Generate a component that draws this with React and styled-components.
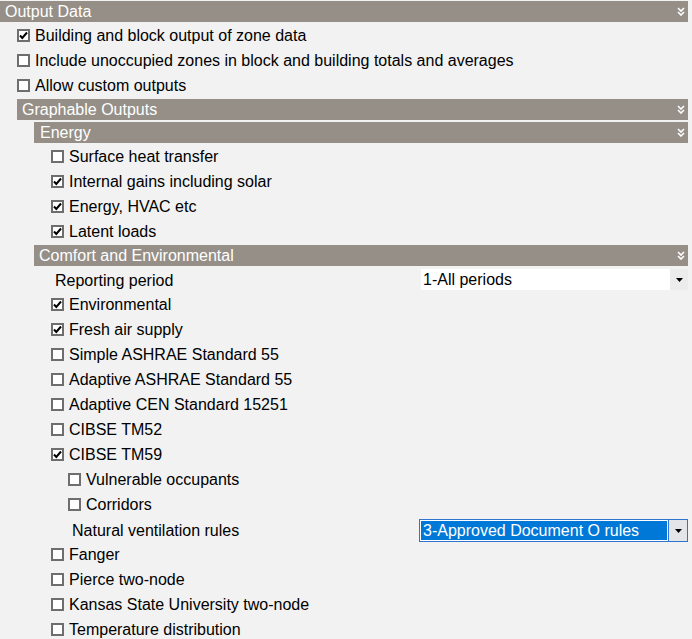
import React from "react";
import styled, { createGlobalStyle } from "styled-components";

const GlobalStyle = createGlobalStyle`
  html, body {
    margin: 0;
    padding: 0;
    background: #f2f2f2;
  }
  body {
    font-family: "Liberation Sans", Arial, sans-serif;
    font-size: 16px;
    color: #000;
  }
`;

const Panel = styled.div`
  width: 688px;
  height: 639px;
  overflow: hidden;
  background: #f2f2f2;
`;

const SectionWrap = styled.div`
  display: flex;
  flex-direction: column;
`;

const Header = styled.div`
  display: flex;
  align-items: center;
  justify-content: space-between;
  height: 21px;
  margin: 1px 0;
  padding: 0 3px 0 ${({ pad }) => pad || 5}px;
  background: #968f88;
  color: #fff;
  font-size: 16px;
  line-height: 21px;
`;

const Body = styled.div`
  display: flex;
  flex-direction: column;
  padding-left: 17px;
`;

const Row = styled.label`
  display: flex;
  align-items: center;
  gap: 5px;
  height: 25px;
  white-space: nowrap;
`;

const Box = styled.span`
  display: inline-flex;
  align-items: center;
  justify-content: center;
  box-sizing: border-box;
  width: 13px;
  height: 13px;
  border: 2px solid #6e6e6e;
  background: #fff;
  flex: none;
`;

const FieldRow = styled.div`
  display: flex;
  align-items: center;
  justify-content: space-between;
  height: 25px;
  padding-left: 4px;
  padding-top: 2px;
  box-sizing: border-box;
`;

const Select = styled.div`
  display: flex;
  box-sizing: border-box;
  width: ${({ w }) => w}px;
  height: ${({ active }) => (active ? 23 : 21)}px;
  margin-top: ${({ active }) => (active ? 0 : -2)}px;
  background: #fff;
  border: ${({ active }) => (active ? "1px solid #2f74d0" : "none")};
`;

const SelectText = styled.div`
  flex: 1;
  display: flex;
  align-items: center;
  padding-left: 2px;
  box-sizing: border-box;
  color: ${({ active }) => (active ? "#fff" : "#000")};
  background: ${({ active }) => (active ? "#0078d7" : "#fff")};
  border: ${({ active }) => (active ? "1px solid #fff" : "none")};
`;

const SelectButton = styled.div`
  width: 18px;
  display: flex;
  align-items: center;
  justify-content: center;
  background: ${({ active }) => (active ? "#e3e5e8" : "#ececec")};
  border-left: ${({ active }) => (active ? "1px solid #2f74d0" : "none")};
`;

const Label = styled.span`
  padding-left: ${({ pad }) => pad || 0}px;
`;

const Nested = styled.div`
  display: flex;
  flex-direction: column;
  padding-left: 17px;
`;

const Chevrons = () => (
  <svg width="8" height="9" viewBox="0 0 8 9">
    <polyline points="1,1 4,4 7,1" fill="none" stroke="#fff" strokeWidth="1.6" />
    <polyline points="1,5 4,8 7,5" fill="none" stroke="#fff" strokeWidth="1.6" />
  </svg>
);

const Tick = () => (
  <svg width="9" height="9" viewBox="0 0 9 9">
    <polyline points="1,4.5 3.3,7 8,1.5" fill="none" stroke="#000" strokeWidth="2" />
  </svg>
);

const Arrow = () => (
  <svg width="7" height="4" viewBox="0 0 7 4">
    <polygon points="0,0 7,0 3.5,4" fill="#000" />
  </svg>
);

const Section = ({ title, pad, children }) => (
  <SectionWrap>
    <Header pad={pad}>
      <span>{title}</span>
      <Chevrons />
    </Header>
    <Body>{children}</Body>
  </SectionWrap>
);

const Check = ({ checked, children }) => (
  <Row>
    <Box>{checked && <Tick />}</Box>
    <span>{children}</span>
  </Row>
);

const Dropdown = ({ label, value, active, w, labelPad }) => (
  <FieldRow>
    <Label pad={labelPad}>{label}</Label>
    <Select active={active} w={w}>
      <SelectText active={active}>{value}</SelectText>
      <SelectButton active={active}>
        <Arrow />
      </SelectButton>
    </Select>
  </FieldRow>
);

export default function App() {
  return (
    <Panel>
      <GlobalStyle />
      <Section title="Output Data" pad={5}>
        <Check checked>Building and block output of zone data</Check>
        <Check>Include unoccupied zones in block and building totals and averages</Check>
        <Check>Allow custom outputs</Check>
        <Section title="Graphable Outputs" pad={5}>
          <Section title="Energy" pad={6}>
            <Check>Surface heat transfer</Check>
            <Check checked>Internal gains including solar</Check>
            <Check checked>Energy, HVAC etc</Check>
            <Check checked>Latent loads</Check>
          </Section>
          <Section title="Comfort and Environmental" pad={5}>
            <Dropdown label="Reporting period" value="1-All periods" w={267} />
            <Check checked>Environmental</Check>
            <Check checked>Fresh air supply</Check>
            <Check>Simple ASHRAE Standard 55</Check>
            <Check>Adaptive ASHRAE Standard 55</Check>
            <Check>Adaptive CEN Standard 15251</Check>
            <Check>CIBSE TM52</Check>
            <Check checked>CIBSE TM59</Check>
            <Nested>
              <Check>Vulnerable occupants</Check>
              <Check>Corridors</Check>
            </Nested>
            <Dropdown
              label="Natural ventilation rules"
              value="3-Approved Document O rules"
              active
              w={269}
              labelPad={17}
            />
            <Check>Fanger</Check>
            <Check>Pierce two-node</Check>
            <Check>Kansas State University two-node</Check>
            <Check>Temperature distribution</Check>
          </Section>
        </Section>
      </Section>
    </Panel>
  );
}
